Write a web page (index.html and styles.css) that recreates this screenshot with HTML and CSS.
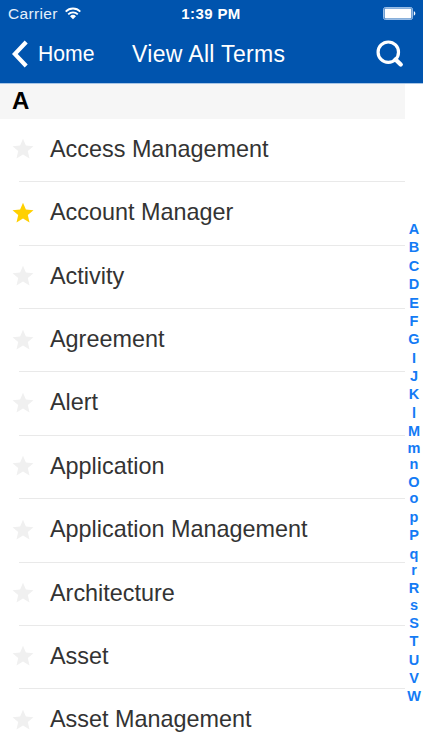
FILE: index.html
```html
<!DOCTYPE html>
<html lang="en">
<head>
<meta charset="utf-8">
<title>View All Terms</title>
<link rel="stylesheet" href="styles.css">
</head>
<body>
<svg class="defs" width="0" height="0"><symbol id="star" viewBox="0 0 22 22"><path d="M11 .7l2.9 6.9 7.6.6-5.7 4.9 1.7 7.5-6.5-4-6.5 4 1.7-7.5L.5 8.2l7.6-.6z"/></symbol></svg>
<header class="header">
  <div class="status">
    <div class="carrier"><span>Carrier</span>
      <svg class="wifi" width="16" height="13" viewBox="0 0 16 13"><g fill="none" stroke="#fff" stroke-width="1.8"><path d="M.7 4.6a10.2 10.2 0 0 1 14.6 0"/><path d="M3.2 7.3a6.8 6.8 0 0 1 9.6 0"/></g><path fill="#fff" d="M5 9.3a4.3 4.3 0 0 1 6 0l-3 3z"/></svg>
    </div>
    <div class="time">1:39 PM</div>
    <svg class="battery" width="33" height="13" viewBox="0 0 33 13"><rect x=".6" y=".6" width="28.8" height="11.8" rx="1.6" fill="none" stroke="#a9c9ed" stroke-width="1"/><rect x="1.6" y="1.6" width="26.8" height="9.8" rx=".8" fill="#fff"/><path d="M30.8 4.3c2 .6 2 3.8 0 4.4z" fill="#fff"/></svg>
  </div>
  <nav class="nav">
    <a class="back"><svg width="16" height="28" viewBox="0 0 16 28"><path d="M14.2 2L2.8 14l11.4 12" fill="none" stroke="#fff" stroke-width="4.2"/></svg><span>Home</span></a>
    <h1>View All Terms</h1>
    <svg class="search" width="28" height="28" viewBox="0 0 28 28" fill="none" stroke="#fff"><circle cx="12.3" cy="12.2" r="10.2" stroke-width="3.2"/><path d="M19.5 19.5l5.2 5" stroke-width="4.4" stroke-linecap="round"/></svg>
  </nav>
</header>
<div class="content">
  <main class="list">
    <h2>A</h2>
    <ul>
      <li><svg class="star"><use href="#star"/></svg><span>Access Management</span></li>
      <li><svg class="star on"><use href="#star"/></svg><span>Account Manager</span></li>
      <li><svg class="star"><use href="#star"/></svg><span>Activity</span></li>
      <li><svg class="star"><use href="#star"/></svg><span>Agreement</span></li>
      <li><svg class="star"><use href="#star"/></svg><span>Alert</span></li>
      <li><svg class="star"><use href="#star"/></svg><span>Application</span></li>
      <li><svg class="star"><use href="#star"/></svg><span>Application Management</span></li>
      <li><svg class="star"><use href="#star"/></svg><span>Architecture</span></li>
      <li><svg class="star"><use href="#star"/></svg><span>Asset</span></li>
      <li><svg class="star"><use href="#star"/></svg><span>Asset Management</span></li>
    </ul>
  </main>
  <aside class="index">
    <b>A</b><b>B</b><b>C</b><b>D</b><b>E</b><b>F</b><b>G</b><b>I</b><b>J</b><b>K</b><b>l</b><b>M</b><b class="low">m</b><b class="low">n</b><b>O</b><b class="low">o</b><b>p</b><b>P</b><b>q</b><b class="low">r</b><b>R</b><b class="low">s</b><b>S</b><b>T</b><b>U</b><b>V</b><b>W</b>
  </aside>
</div>
</body>
</html>
```
FILE: styles.css
```css
* { box-sizing: border-box; margin: 0; padding: 0; }
body {
  width: 423px;
  height: 750px;
  overflow: hidden;
  background: #fff;
  font-family: "Liberation Sans", Arial, sans-serif;
  display: flex;
  flex-direction: column;
}
.defs { display: none; }
.header {
  flex: none;
  height: 84px;
  background: #0054ae;
  border-bottom: 1px solid #a8c6e6;
  color: #fff;
}
.status {
  height: 27px;
  display: grid;
  grid-template-columns: 1fr auto 1fr;
  align-items: center;
  padding: 0 7px 0 8px;
  font-size: 15.5px;
}
.carrier { display: flex; align-items: center; gap: 7px; letter-spacing: 0.35px; color: #e4effb; }
.time { margin-left: -2px; font-weight: bold; font-size: 15px; letter-spacing: 0.4px; }
.battery { justify-self: end; }
.nav {
  height: 54px;
  display: grid;
  grid-template-columns: 120px 1fr 120px;
  align-items: center;
  padding: 0 19px 0 12px;
}
.back { display: flex; align-items: center; gap: 10px; font-size: 21.2px; }
.nav h1 { font-size: 23px; font-weight: normal; white-space: nowrap; letter-spacing: 0.33px; }
.search { justify-self: end; margin-right: 1px; }
.content { flex: 1; min-height: 0; display: flex; }
.list { width: 405px; }
.list h2 {
  height: 35px;
  padding-left: 12px;
  background: #f6f6f6;
  color: #000;
  font-size: 24px;
  line-height: 34px;
}
.list ul { list-style: none; }
.list li {
  height: 63.37px;
  padding: 0 0 2.4px 12px;
  display: flex;
  align-items: center;
  gap: 16px;
  font-size: 23.4px;
  color: #333;
  background: linear-gradient(#e9e9e9, #e9e9e9) 19px 100% / 386px 1px no-repeat;
}
.star { width: 22px; height: 22px; fill: #f0f0f0; }
.star.on { fill: #ffd000; }
.index {
  width: 18px;
  padding-top: 136px;
  display: flex;
  flex-direction: column;
  align-items: center;
  color: #147bf5;
  font-size: 14.5px;
}
.index b { flex: none; height: 18.38px; line-height: 18.38px; }
.index .low { height: 16.3px; line-height: 14.7px; }
```
